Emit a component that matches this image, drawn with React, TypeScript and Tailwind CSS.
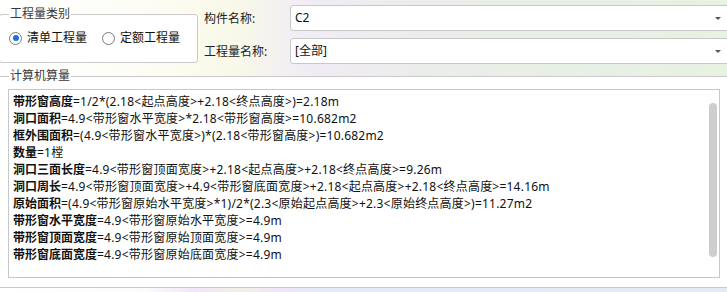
import React from 'react';

type Line = { label: string; expr: string };

const lines: Line[] = [
  { label: '带形窗高度', expr: '=1/2*(2.18<起点高度>+2.18<终点高度>)=2.18m' },
  { label: '洞口面积', expr: '=4.9<带形窗水平宽度>*2.18<带形窗高度>=10.682m2' },
  { label: '框外围面积', expr: '=(4.9<带形窗水平宽度>)*(2.18<带形窗高度>)=10.682m2' },
  { label: '数量', expr: '=1樘' },
  { label: '洞口三面长度', expr: '=4.9<带形窗顶面宽度>+2.18<起点高度>+2.18<终点高度>=9.26m' },
  { label: '洞口周长', expr: '=4.9<带形窗顶面宽度>+4.9<带形窗底面宽度>+2.18<起点高度>+2.18<终点高度>=14.16m' },
  { label: '原始面积', expr: '=(4.9<带形窗原始水平宽度>*1)/2*(2.3<原始起点高度>+2.3<原始终点高度>)=11.27m2' },
  { label: '带形窗水平宽度', expr: '=4.9<带形窗原始水平宽度>=4.9m' },
  { label: '带形窗顶面宽度', expr: '=4.9<带形窗原始顶面宽度>=4.9m' },
  { label: '带形窗底面宽度', expr: '=4.9<带形窗原始底面宽度>=4.9m' },
];

const Radio: React.FC<{ checked?: boolean; label: string }> = ({ checked, label }) => (
  <label className="flex items-center gap-[5px]">
    <span className="flex h-[13px] w-[13px] items-center justify-center rounded-full border border-[#7a7a7a] bg-white">
      {checked && <span className="h-[6px] w-[6px] rounded-full bg-[#1f6fde]" />}
    </span>
    <span className="text-[#111]">{label}</span>
  </label>
);

const Combo: React.FC<{ value: string }> = ({ value }) => (
  <div className="relative flex h-[26px] items-center rounded-[3px] border border-[#c8c8c8] bg-white pl-[4px] text-[#111]">
    {value}
    {/* dropdown caret */}
    <span className="absolute right-[9px] top-[11px] h-0 w-0 border-x-[3px] border-t-[3px] border-x-transparent border-t-[#555]" />
  </div>
);

export default function App() {
  return (
    <div className="h-[292px] w-[727px] overflow-hidden bg-[linear-gradient(90deg,#ffffff_0%,#fdfdf6_18%,#f9f9e9_32%,#f1ecf5_42%,#ebedea_58%,#e6f2e2_100%)] font-['Noto_Sans','Noto_Sans_CJK_SC',sans-serif] text-[12px] leading-[16px]">
      {/* top row */}
      <div className="flex h-[64px]">
        <fieldset className="ml-[-1px] mt-[6px] h-[57px] w-[199px] shrink-0 rounded-[3px] border border-[#c9c9c9] bg-white">
          <legend className="ml-[9px] px-[1px] text-[#3a3a3a]">工程量类别</legend>
          <div className="mt-[8px] flex items-center gap-[15px] pl-[9px]">
            <Radio checked label="清单工程量" />
            <Radio label="定额工程量" />
          </div>
        </fieldset>

        <div className="ml-[6px] mr-[-4px] grid flex-1 grid-cols-[86px_1fr] gap-y-[6px] pt-[5px]">
          <span className="self-center pt-[2px] text-[#222]">构件名称:</span>
          <Combo value="C2" />
          <span className="self-center pt-[2px] text-[#222]">工程量名称:</span>
          <Combo value="[全部]" />
        </div>
      </div>

      {/* calculation panel */}
      <fieldset className="ml-[-1px] mt-[4px] h-[220px] w-[729px] border border-[#c9c9c9] bg-white">
        <legend className="ml-[9px] px-[1px] text-[#3a3a3a]">计算机算量</legend>
        <div className="relative ml-[8px] mt-[5px] h-[189px] w-[712px] border border-[#c8c8c8] bg-white pl-[4px] pt-[3px] text-[#111]">
          {lines.map((l) => (
            <div key={l.label} className="whitespace-nowrap leading-[17px]">
              <span className="font-bold">{l.label}</span>
              <span className="tracking-[0.22px]">{l.expr}</span>
            </div>
          ))}
          <div className="absolute right-[2px] top-[13px] h-[154px] w-[8px] rounded-full bg-[#cdcdcd]" />
        </div>
      </fieldset>

      <div className="h-[6px] bg-[linear-gradient(90deg,#ffffff_0%,#fbfbfb_20%,#f0e6f8_27%,#f1f1e6_33%,#eee6f8_38%,#e4eaf6_45%,#e4ebf5_100%)]" />
    </div>
  );
}
